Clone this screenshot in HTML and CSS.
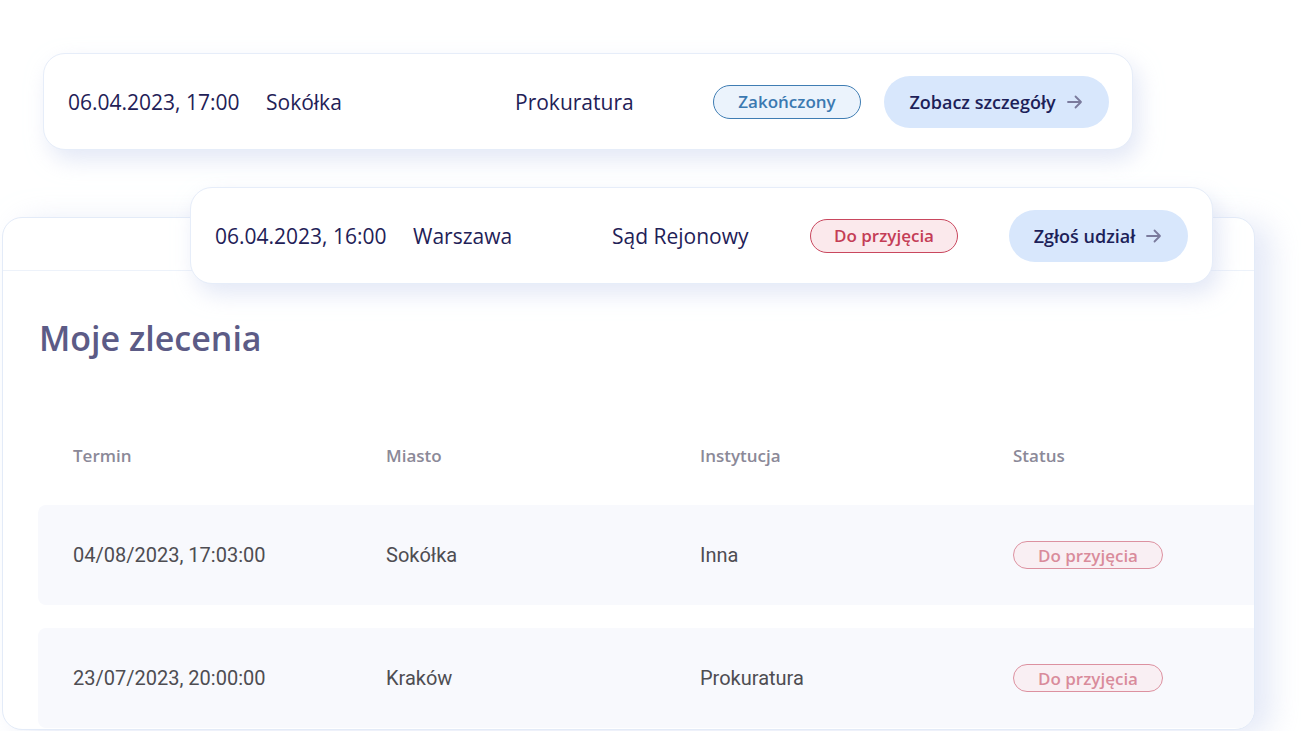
FILE: index.html
```html
<!DOCTYPE html>
<html lang="pl">
<head>
<meta charset="utf-8">
<title>Moje zlecenia</title>
<link rel="stylesheet" href="styles.css">
</head>
<body>
<div class="stage">
  <section class="panel">
    <div class="panel-top"></div>
    <h1 class="title">Moje zlecenia</h1>
    <div class="thead">
      <div>Termin</div>
      <div>Miasto</div>
      <div>Instytucja</div>
      <div>Status</div>
    </div>
    <div class="rows">
      <div class="row">
        <div>04/08/2023, 17:03:00</div>
        <div>Sokółka</div>
        <div>Inna</div>
        <div><span class="badge badge-red badge-faded">Do przyjęcia</span></div>
      </div>
      <div class="row">
        <div>23/07/2023, 20:00:00</div>
        <div>Kraków</div>
        <div>Prokuratura</div>
        <div><span class="badge badge-red badge-faded">Do przyjęcia</span></div>
      </div>
    </div>
  </section>

  <div class="card card-one">
    <div class="cell">06.04.2023, 17:00</div>
    <div class="cell">Sokółka</div>
    <div class="cell">Prokuratura</div>
    <div class="cell"><span class="badge badge-blue badge-lg">Zakończony</span></div>
    <button class="btn">Zobacz szczegóły
      <svg class="arrow" width="18" height="16" viewBox="0 0 18 16"><path d="M2 8h13M9.5 2.5L15 8l-5.5 5.5" fill="none" stroke="currentColor" stroke-width="1.8" stroke-linecap="round" stroke-linejoin="round"/></svg>
    </button>
  </div>

  <div class="card card-two">
    <div class="cell">06.04.2023, 16:00</div>
    <div class="cell">Warszawa</div>
    <div class="cell">Sąd Rejonowy</div>
    <div class="cell"><span class="badge badge-red badge-lg">Do przyjęcia</span></div>
    <button class="btn">Zgłoś udział
      <svg class="arrow" width="18" height="16" viewBox="0 0 18 16"><path d="M2 8h13M9.5 2.5L15 8l-5.5 5.5" fill="none" stroke="currentColor" stroke-width="1.8" stroke-linecap="round" stroke-linejoin="round"/></svg>
    </button>
  </div>
</div>
</body>
</html>
```

FILE: styles.css
```css
* { box-sizing: border-box; }
html, body {
  margin: 0;
  padding: 0;
  background: #ffffff;
}
body {
  width: 1301px;
  height: 731px;
  overflow: hidden;
  font-family: "Open Sans", "Noto Sans", sans-serif;
}
.stage {
  position: relative;
  width: 1301px;
  height: 731px;
  padding-top: 217px;
  padding-left: 2px;
}

/* main panel */
.panel {
  width: 1253px;
  height: 513px;
  border: 1.5px solid #e3ebf8;
  border-radius: 20px;
  background: #fff;
  overflow: hidden;
  box-shadow: 16px 6px 30px rgba(210, 218, 242, 0.6);
}
.panel-top {
  height: 53px;
  border-bottom: 1px solid #edf2fa;
}
.title {
  margin: 45px 0 0 36px;
  font-size: 34px;
  line-height: 44px;
  font-weight: 600;
  color: #5c5b86;
}
.thead, .row {
  display: grid;
  grid-template-columns: 313px 314px 313px 1fr;
  padding-left: 35px;
}
.thead {
  margin: 84px 0 0 35px;
  font-size: 17px;
  line-height: 24px;
  font-weight: 600;
  color: #8b8998;
}
.rows {
  margin: 37px 0 0 35px;
  display: flex;
  flex-direction: column;
  gap: 23px;
}
.row {
  height: 100px;
  align-items: center;
  background: #f8f9fd;
  border-radius: 8px;
  margin-right: -20px;
  font-family: Roboto, "Liberation Sans", sans-serif;
  font-size: 20px;
  color: #4e4d52;
}

/* badges */
.badge {
  display: inline-flex;
  align-items: center;
  justify-content: center;
  height: 28px;
  width: 150px;
  border-radius: 14px;
  font-family: "Open Sans", sans-serif;
  font-size: 17px;
  font-weight: 600;
  border: 1.5px solid;
}
.badge-lg {
  height: 34px;
  width: 148px;
  border-radius: 17px;
}
.badge-red {
  background: #fbe9ec;
  border-color: #c9475e;
  color: #c43d56;
}
.badge-faded {
  opacity: 0.58;
}
.badge-blue {
  background: #ebf3fc;
  border-color: #3f7db3;
  color: #3b79b1;
}

/* floating cards */
.card {
  position: absolute;
  height: 97px;
  display: grid;
  align-items: center;
  background: #fff;
  border: 1.5px solid #e6edf9;
  border-radius: 22px;
  box-shadow: 6px 10px 22px rgba(208, 216, 240, 0.6);
  padding-left: 24px;
  font-size: 21px;
  color: #1f2157;
}
.card-one {
  left: 43px;
  top: 53px;
  width: 1090px;
  grid-template-columns: 198px 249px 198px 171px 225px;
}
.card-two {
  left: 190px;
  top: 187px;
  width: 1023px;
  grid-template-columns: 198px 199px 198px 199px 179px;
}
.cell {
  white-space: nowrap;
}
.btn {
  height: 52px;
  border: 0;
  border-radius: 26px;
  background: #d8e7fc;
  color: #1d1f59;
  font-family: "Open Sans", sans-serif;
  font-size: 18px;
  font-weight: 600;
  display: flex;
  align-items: center;
  justify-content: center;
  gap: 10px;
  padding: 0;
  white-space: nowrap;
}
.arrow {
  color: #7a7a9c;
  flex: none;
}
```
